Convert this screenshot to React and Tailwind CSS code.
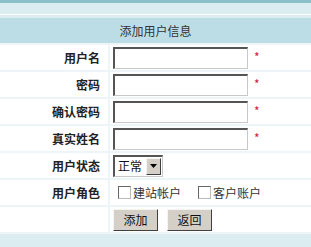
import React from "react";

const font = { fontFamily: '"Noto Sans CJK SC", "Noto Sans", sans-serif' };

function Label({ children }) {
  return (
    <div className="bg-white flex items-center justify-end pr-[8px] text-[12px] font-bold text-[#222] leading-none">
      {children}
    </div>
  );
}

function TextRow({ label }) {
  return (
    <div className="grid grid-cols-[108px_1fr] gap-[2px] h-[25px]">
      <Label>{label}</Label>
      <div className="bg-white flex items-center pl-[3px]">
        <div className="w-[135px] h-[22px] bg-white border-t-2 border-l-2 border-b border-r border-t-[#555] border-l-[#555] border-b-[#c8c8c8] border-r-[#c8c8c8]" />
        <span className="ml-[6px] text-[12px] text-[#cc2233] leading-none mt-[-2px]">*</span>
      </div>
    </div>
  );
}

function Checkbox() {
  return (
    <span className="inline-block w-[13px] h-[13px] bg-white border border-t-[#666] border-l-[#666] border-b-[#bbb] border-r-[#bbb]" />
  );
}

function Button({ children }) {
  return (
    <div className="w-[45px] h-[22px] bg-[#d4d0c8] border border-t-[#f4f4f4] border-l-[#f4f4f4] border-b-[#404040] border-r-[#404040] flex items-center justify-center text-[12px] text-[#111] leading-none">
      {children}
    </div>
  );
}

export default function App() {
  return (
    <div style={font} className="w-[311px] h-[247px] overflow-hidden bg-[#dcedf2] flex flex-col">
      <div className="h-[3px] bg-[#8bbfc9]" />
      <div className="h-[11px] bg-[#dcedf2]" />
      <div className="h-[1px] bg-white" />
      <div className="h-[3px] bg-[#dcedf2]" />
      <div className="h-[25px] bg-[#bcdde6] flex items-center justify-center text-[12px] text-[#333] leading-none">
        添加用户信息
      </div>
      <div className="bg-[#eef5f8] flex flex-col gap-[2px] py-[2px]">
        <TextRow label="用户名" />
        <TextRow label="密码" />
        <TextRow label="确认密码" />
        <TextRow label="真实姓名" />
        <div className="grid grid-cols-[108px_1fr] gap-[2px] h-[25px]">
          <Label>用户状态</Label>
          <div className="bg-white flex items-center pl-[3px]">
            <div className="w-[50px] h-[22px] bg-white border-t-2 border-l-2 border-b border-r border-t-[#555] border-l-[#555] border-b-[#c8c8c8] border-r-[#c8c8c8] flex items-center">
              <span className="pl-[3px] text-[12px] text-[#111] leading-none flex-1">正常</span>
              <div className="w-[15px] h-[17px] mr-[1px] bg-[#d4d0c8] border border-t-[#f4f4f4] border-l-[#f4f4f4] border-b-[#404040] border-r-[#404040] flex items-center justify-center">
                <svg width="7" height="4" viewBox="0 0 7 4">
                  <polygon points="0,0 7,0 3.5,4" fill="#000" />
                </svg>
              </div>
            </div>
          </div>
        </div>
        <div className="grid grid-cols-[108px_1fr] gap-[2px] h-[25px]">
          <Label>用户角色</Label>
          <div className="bg-white flex items-center pl-[8px] text-[12px] text-[#333] leading-none">
            <Checkbox />
            <span className="ml-[2px]">建站帐户</span>
            <span className="ml-[17px] flex items-center">
              <Checkbox />
              <span className="ml-[2px]">客户账户</span>
            </span>
          </div>
        </div>
        <div className="grid grid-cols-[108px_1fr] gap-[2px] h-[25px]">
          <div className="bg-white" />
          <div className="bg-white flex items-center pl-[3px] gap-[9px]">
            <Button>添加</Button>
            <Button>返回</Button>
          </div>
        </div>
      </div>
      <div className="flex-1 bg-[#dcedf2]" />
    </div>
  );
}
